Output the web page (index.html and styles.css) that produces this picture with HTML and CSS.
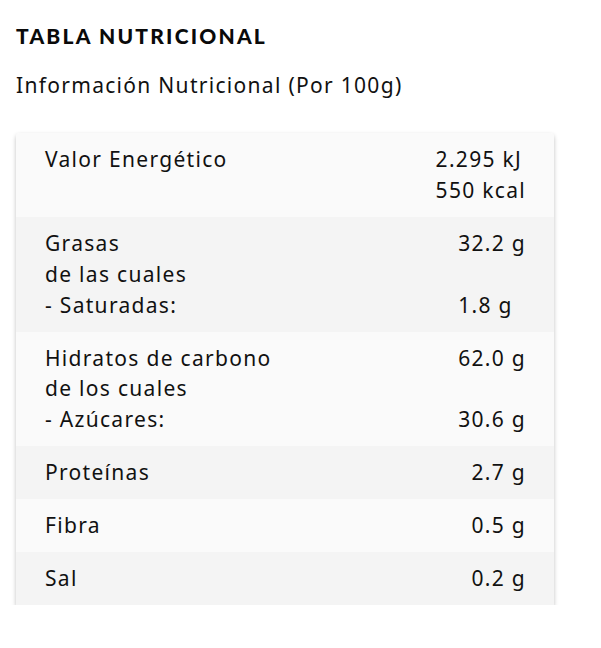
FILE: index.html
```html
<!DOCTYPE html>
<html lang="es">
<head>
<meta charset="utf-8">
<link rel="stylesheet" href="styles.css">
</head>
<body>
<div class="page">
  <h2 class="title">TABLA NUTRICIONAL</h2>
  <p class="subtitle">Información Nutricional (Por 100g)</p>
  <div class="table">
    <div class="row odd">
      <div class="label">Valor Energético</div>
      <div class="value">2.295 kJ<br>550 kcal</div>
    </div>
    <div class="row even">
      <div class="label">Grasas<br>de las cuales<br>- Saturadas:</div>
      <div class="value">32.2 g<br><br>1.8 g</div>
    </div>
    <div class="row odd">
      <div class="label">Hidratos de carbono<br>de los cuales<br>- Azúcares:</div>
      <div class="value">62.0 g<br><br>30.6 g</div>
    </div>
    <div class="row even">
      <div class="label">Proteínas</div>
      <div class="value">2.7 g</div>
    </div>
    <div class="row odd">
      <div class="label">Fibra</div>
      <div class="value">0.5 g</div>
    </div>
    <div class="row even">
      <div class="label">Sal</div>
      <div class="value">0.2 g</div>
    </div>
  </div>
</div>
</body>
</html>
```
FILE: styles.css
```css
* { box-sizing: border-box; }
html, body { margin: 0; padding: 0; background: #fff; }
body {
  font-family: "Noto Sans", "Open Sans", sans-serif;
  color: #111;
}
.page {
  padding: 22px 16px 0 16px;
}
.title {
  margin: 0;
  font-family: "Lato", sans-serif;
  font-weight: 900;
  font-size: 21px;
  line-height: 28px;
  letter-spacing: 2.2px;
  color: #0a0a0a;
}
.subtitle {
  margin: 20px 0 0 0;
  font-size: 21px;
  line-height: 30px;
  letter-spacing: 1.3px;
}
.table {
  margin-top: 33px;
  width: 538px;
  border-radius: 4px 4px 0 0;
  overflow: hidden;
  box-shadow: 0 2px 4px rgba(0,0,0,0.25);
}
.row {
  display: flex;
  justify-content: space-between;
  padding: 11px 28px 11px 29px;
  font-size: 21px;
  line-height: 30.9px;
  letter-spacing: 1.3px;
}
.odd { background: #fafafa; }
.even { background: #f4f4f4; }
.value { text-align: left; }
```
